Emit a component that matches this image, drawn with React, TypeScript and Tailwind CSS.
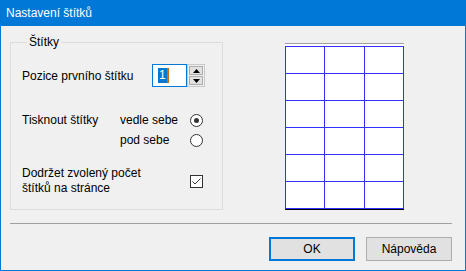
import React from "react";

const rows = [0, 1, 2, 3, 4, 5];
const cols = [0, 1, 2];

function SpinArrow({ up }: { up: boolean }) {
  return (
    <svg width="7" height="4" viewBox="0 0 7 4">
      <path d={up ? "M0 4 L3.5 0 L7 4 Z" : "M0 0 L3.5 4 L7 0 Z"} fill="#000" />
    </svg>
  );
}

function Radio({ checked }: { checked?: boolean }) {
  return (
    <div className="flex h-[13px] w-[13px] items-center justify-center rounded-full border border-[#333333] bg-white">
      {checked && <div className="h-[5px] w-[5px] rounded-full bg-[#333333]" />}
    </div>
  );
}

export default function App() {
  return (
    <div
      className="flex h-[271px] w-[466px] flex-col bg-[#0078d7] px-[1px] pb-[1px] text-[12px] text-black"
      style={{ fontFamily: '"Liberation Sans", Arial, sans-serif' }}
    >
      <div className="flex h-[26px] shrink-0 items-center pl-[5px] text-white">Nastavení štítků</div>

      <div className="flex flex-1 flex-col bg-[#f0f0f0]">
        <div className="flex pl-[9px] pt-[8px]">
          <fieldset className="w-[213px] border border-[#dcdcdc] pb-[13px] pl-[11px]">
            <legend className="ml-[5px] px-[2px] leading-[16px]">Štítky</legend>

            <div className="mt-[14px] flex h-[23px] items-center">
              <span className="w-[130px]">Pozice prvního štítku</span>
              <div className="flex h-[23px] w-[35px] items-center border border-[#0078d7] bg-white pl-[5px]">
                <span className="flex h-[15px] items-center bg-[#0078d7] px-[1px] leading-[15px] text-white">1</span>
                <span className="h-[15px] w-[2px] bg-[#d46a00]" />
              </div>
              <div className="flex h-[23px] w-[18px] flex-col gap-[1px] border border-[#c8c8c8] bg-[#f0f0f0] p-[1px]">
                <div className="flex flex-1 items-center justify-center border border-[#adadad] bg-[#e1e1e1]">
                  <SpinArrow up />
                </div>
                <div className="flex flex-1 items-center justify-center border border-[#adadad] bg-[#e1e1e1]">
                  <SpinArrow up={false} />
                </div>
              </div>
            </div>

            <div className="mt-[23px] flex">
              <span className="flex h-[20px] w-[98px] items-center">Tisknout štítky</span>
              <div className="flex flex-col">
                <div className="flex h-[20px] items-center">
                  <span className="w-[70px]">vedle sebe</span>
                  <Radio checked />
                </div>
                <div className="flex h-[20px] items-center">
                  <span className="w-[70px]">pod sebe</span>
                  <Radio />
                </div>
              </div>
            </div>

            <div className="mt-[16px] flex items-center">
              <span className="w-[168px] leading-[15px]">
                Dodržet zvolený počet
                <br />
                štítků na stránce
              </span>
              <div className="flex h-[13px] w-[13px] items-center justify-center border border-[#333333] bg-white">
                <svg width="11" height="11" viewBox="0 0 11 11">
                  <path d="M1.5 5.5 L4 8 L9.5 2.5" fill="none" stroke="#333333" strokeWidth="1" />
                </svg>
              </div>
            </div>
          </fieldset>

          <div className="ml-[62px] mt-[9px] flex h-fit flex-col border-b border-t border-b-black border-t-[#a0a0a0] bg-white pt-[2px]">
            <div className="grid grid-cols-[38px_39px_38px] gap-[1px] bg-[#3232ff] p-[1px]">
              {rows.map((r) =>
                cols.map((c) => <div key={`${r}-${c}`} className="h-[26px] bg-white" />)
              )}
            </div>
          </div>
        </div>

        <div className="ml-[9px] mr-[13px] mt-[13px] h-px bg-[#a0a0a0]" />

        <div className="mt-[13px] flex justify-end gap-[11px] pr-[13px]">
          <button className="flex h-[24px] w-[86px] items-center justify-center border-2 border-[#0078d7] bg-[#e1e1e1]">
            OK
          </button>
          <button className="flex h-[24px] w-[86px] items-center justify-center border border-[#adadad] bg-[#e1e1e1]">
            Nápověda
          </button>
        </div>
      </div>
    </div>
  );
}
